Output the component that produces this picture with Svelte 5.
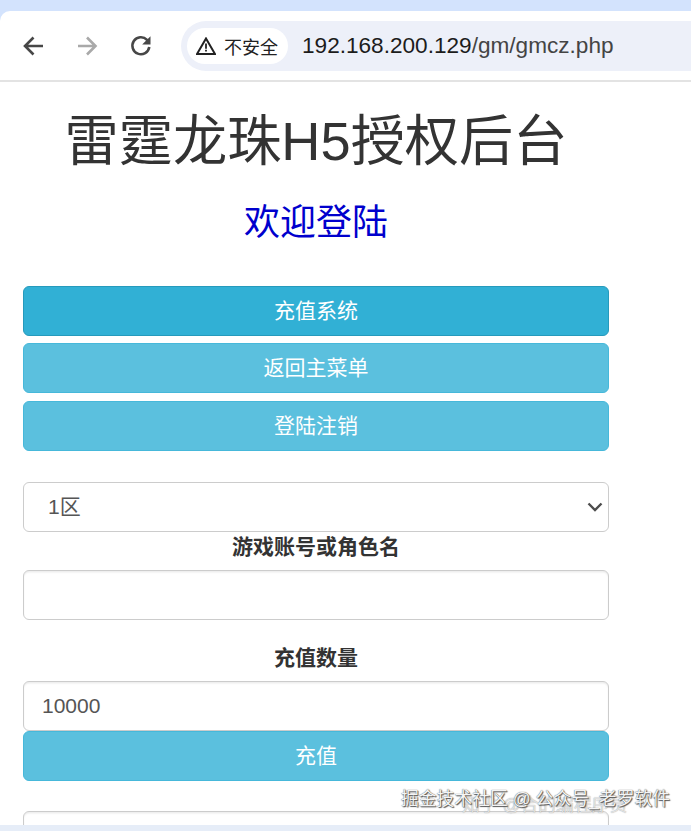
<script lang="ts">
	const topButtons = [
		{ label: '充值系统', active: true },
		{ label: '返回主菜单', active: false },
		{ label: '登陆注销', active: false },
	];
</script>

<div class="screen">
	<div class="chrome">
		<div class="toolbar">
			<svg class="nav" viewBox="0 0 24 24" fill="none" stroke="#474747" stroke-width="2.600">
				<path d="M22 12H4.500M12.500 3.500 4 12l8.500 8.500" />
			</svg>
			<svg class="nav" viewBox="0 0 24 24" fill="none" stroke="#a9a9a9" stroke-width="2.600">
				<path d="M3 12h17.500M12 3.500l8.500 8.500-8.500 8.500" />
			</svg>
			<svg class="nav" viewBox="0 0 24 24" fill="none" stroke="#474747" stroke-width="2.600">
				<path d="M20.300 13a8.500 8.500 0 1 1-2.300-7.200L20 8" />
				<path d="M21.500 2.200v8.300h-8.300z" fill="#474747" stroke="none" />
			</svg>
			<div class="omnibox">
				<div class="chip">
					<svg class="warn" viewBox="0 0 20 18">
						<path d="M10 1.500 19 17H1z" fill="none" stroke="#222" stroke-width="2" />
						<path d="M9.100 6.500h1.800v5.200H9.100zM9.100 12.700h1.800v1.800H9.100z" fill="#222" />
					</svg>
					<span>不安全</span>
				</div>
				<span class="url"><b>192.168.200.129</b>/gm/gmcz.php</span>
			</div>
		</div>
	</div>

	<main class="page">
		<h1>雷霆龙珠H5授权后台</h1>
		<h2>欢迎登陆</h2>

		<div class="menu">
			{#each topButtons as btn}
				<button class="btn" class:active={btn.active}>{btn.label}</button>
			{/each}
		</div>

		<div class="select">
			<span>1区</span>
			<svg viewBox="0 0 16 16" fill="none" stroke="#4d4d4d" stroke-width="2.400">
				<path d="M1.500 4.500 8 11l6.500-6.500" />
			</svg>
		</div>

		<label class="first" for="account">游戏账号或角色名</label>
		<input id="account" type="text" />

		<label class="second" for="amount">充值数量</label>
		<input id="amount" type="text" value="10000" />
		<button class="btn submit">充值</button>

		<input class="last" type="text" />
	</main>

	<div class="footer-strip"></div>
	<div class="mark ghost">知乎 @合的编程序员</div>
	<div class="mark">掘金技术社区 @ 公众号_老罗软件</div>
</div>

<style>
	:global(body) {
		margin: 0;
		background: #fff;
	}

	.screen {
		position: relative;
		width: 691px;
		height: 831px;
		overflow: hidden;
		font-family: "Liberation Sans", "Noto Sans CJK SC", sans-serif;
		color: #333;
		background: #fff;
	}

	.chrome {
		padding-top: 11px;
		background: #d3e3fd;
	}

	.toolbar {
		display: flex;
		align-items: center;
		height: 69px;
		padding-left: 21px;
		gap: 30px;
		background: #fff;
		border-radius: 10px 0 0 0;
		border-bottom: 2px solid #e3e3e3;
	}

	.nav {
		width: 24px;
		height: 24px;
		flex: none;
	}

	.omnibox {
		display: flex;
		align-items: center;
		flex: 1;
		height: 50px;
		margin-left: -2px;
		padding-left: 6px;
		background: #edf0f9;
		border-radius: 25px 0 0 25px;
	}

	.chip {
		display: flex;
		align-items: center;
		gap: 8px;
		height: 36px;
		padding: 0 10px 0 9px;
		background: #fff;
		border-radius: 18px;
		font-size: 18px;
		color: #222;
	}

	.warn {
		width: 20px;
		height: 18px;
	}

	.url {
		margin-left: 14px;
		font-size: 22.600px;
		color: #444;
	}

	.url b {
		font-weight: 400;
		color: #1c1c1c;
	}

	.page {
		display: flex;
		flex-direction: column;
		width: 586px;
		margin-left: 23px;
	}

	h1 {
		margin: 29px 0 0;
		font-size: 54.200px;
		line-height: 60px;
		font-weight: 400;
		text-align: center;
		color: #333;
	}

	h2 {
		margin: 32px 0 0;
		font-size: 36px;
		line-height: 40px;
		font-weight: 400;
		text-align: center;
		color: #0000cd;
	}

	.menu {
		display: flex;
		flex-direction: column;
		gap: 7.500px;
		margin-top: 42.800px;
	}

	.btn {
		display: block;
		width: 100%;
		height: 50px;
		padding: 0 0 4px;
		box-sizing: border-box;
		border: 1px solid #46b8da;
		border-radius: 6px;
		background: #5bc0de;
		color: #fff;
		font: inherit;
		font-size: 21px;
	}

	.btn.active {
		background: #31b0d5;
		border-color: #269abc;
	}

	.select {
		display: flex;
		align-items: center;
		justify-content: space-between;
		height: 50px;
		margin-top: 31.200px;
		padding: 0 5px 0 24px;
		box-sizing: border-box;
		border: 1px solid #ccc;
		border-radius: 6px;
		font-size: 21px;
		color: #555;
		background: #fff;
	}

	.select span {
		margin-bottom: 4px;
	}

	.select svg {
		width: 16px;
		height: 16px;
	}

	label {
		display: block;
		text-align: center;
		font-size: 21px;
		font-weight: 700;
		line-height: 30px;
		color: #333;
	}

	.first {
		margin-bottom: 8px;
	}

	.second {
		margin-top: 23px;
		margin-bottom: 8px;
	}

	input {
		display: block;
		width: 100%;
		height: 50px;
		padding: 0 18px;
		box-sizing: border-box;
		border: 1px solid #ccc;
		border-radius: 6px;
		font: inherit;
		font-size: 21px;
		color: #555;
		background: #fff;
		box-shadow: inset 0 1.500px 1.500px rgba(0, 0, 0, 0.075);
	}

	.last {
		margin-top: 30px;
	}

	.footer-strip {
		position: absolute;
		left: 0;
		right: 0;
		bottom: 0;
		height: 6px;
		background: #e6edf8;
	}

	.mark {
		position: absolute;
		top: 788px;
		left: 401px;
		font-size: 17.800px;
		line-height: 22px;
		white-space: nowrap;
		color: #f4f4f4;
		text-shadow: 0 0 1px #333, 1px 1px 1px #555;
	}

	.mark.ghost {
		top: 794px;
		left: 462px;
		color: rgba(255, 255, 255, 0.7);
		text-shadow: 0 0 1px #888;
	}
</style>
